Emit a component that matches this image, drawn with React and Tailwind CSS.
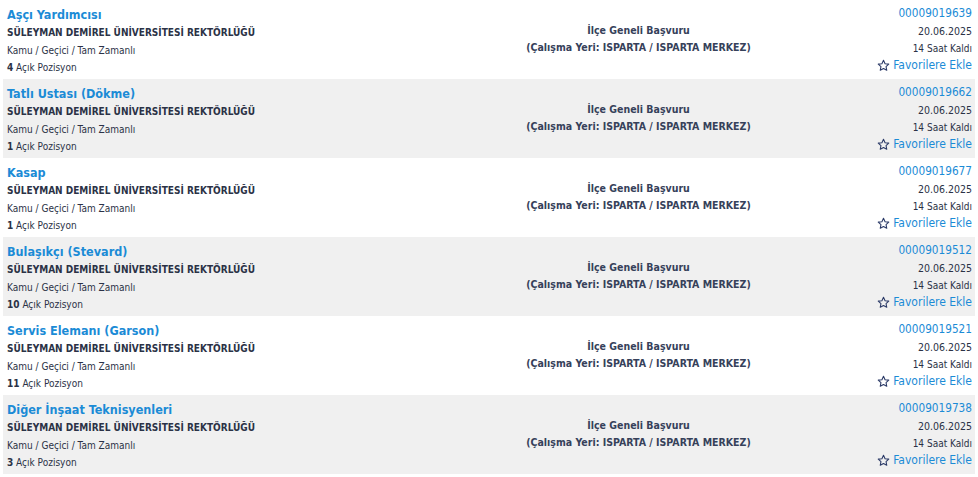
import React from "react";

const jobs = [
  { title: "Aşçı Yardımcısı", count: 4, no: "00009019639" },
  { title: "Tatlı Ustası (Dökme)", count: 1, no: "00009019662" },
  { title: "Kasap", count: 1, no: "00009019677" },
  { title: "Bulaşıkçı (Stevard)", count: 10, no: "00009019512" },
  { title: "Servis Elemanı (Garson)", count: 11, no: "00009019521" },
  { title: "Diğer İnşaat Teknisyenleri", count: 3, no: "00009019738" },
];

function StarIcon() {
  return (
    <svg width="13" height="13" viewBox="0 0 24 24" className="shrink-0">
      <path
        d="M12 2.5l2.9 6.2 6.8.8-5 4.6 1.3 6.7L12 17.5l-6 3.3 1.3-6.7-5-4.6 6.8-.8z"
        fill="none"
        stroke="#2b3a67"
        strokeWidth="2"
        strokeLinejoin="round"
      />
    </svg>
  );
}

function Row({ job, odd }) {
  return (
    <div
      className={`flex h-[79px] pl-[4px] pr-[3px] ${
        odd ? "bg-[#f0f0f0]" : "bg-white"
      }`}
    >
      <div className="flex w-[478px] flex-col pt-[5px]">
        <div className="h-[19px] text-[12.5px] font-bold leading-[19px] text-[#1b8bd6]">
          {job.title}
        </div>
        <div className="h-[18px] text-[10px] font-bold leading-[18px] text-[#2b3246]">
          SÜLEYMAN DEMİREL ÜNİVERSİTESİ REKTÖRLÜĞÜ
        </div>
        <div className="h-[17px] text-[10px] leading-[17px] text-[#2b3246]">
          Kamu / Geçici / Tam Zamanlı
        </div>
        <div className="h-[17px] text-[10px] leading-[17px] text-[#2b3246]">
          <span className="font-bold">{job.count}</span> Açık Pozisyon
        </div>
      </div>
      <div className="flex flex-1 flex-col items-center pt-[22px] text-[10.5px] font-bold leading-[17px] text-[#36415a]">
        <div>İlçe Geneli Başvuru</div>
        <div>(Çalışma Yeri: ISPARTA / ISPARTA MERKEZ)</div>
      </div>
      <div className="flex w-[180px] flex-col items-end pt-[4px]">
        <div className="h-[19px] text-[11.7px] leading-[19px] text-[#1b8bd6]">
          {job.no}
        </div>
        <div className="h-[17px] text-[10.5px] leading-[17px] text-[#2b3246]">
          20.06.2025
        </div>
        <div className="h-[17px] text-[10px] leading-[17px] text-[#2b3246]">
          14 Saat Kaldı
        </div>
        <div className="flex h-[17px] items-center gap-[3px] text-[12px] leading-[17px] text-[#1b8bd6]">
          <StarIcon />
          <span>Favorilere Ekle</span>
        </div>
      </div>
    </div>
  );
}

export default function App() {
  return (
    <div
      className="min-h-[477px] bg-white px-[3px] font-stretch-condensed"
      style={{ fontFamily: '"DejaVu Sans Condensed", "DejaVu Sans", Verdana, sans-serif' }}
    >
      {jobs.map((j, i) => (
        <Row key={j.no} job={j} odd={i % 2 === 1} />
      ))}
    </div>
  );
}
